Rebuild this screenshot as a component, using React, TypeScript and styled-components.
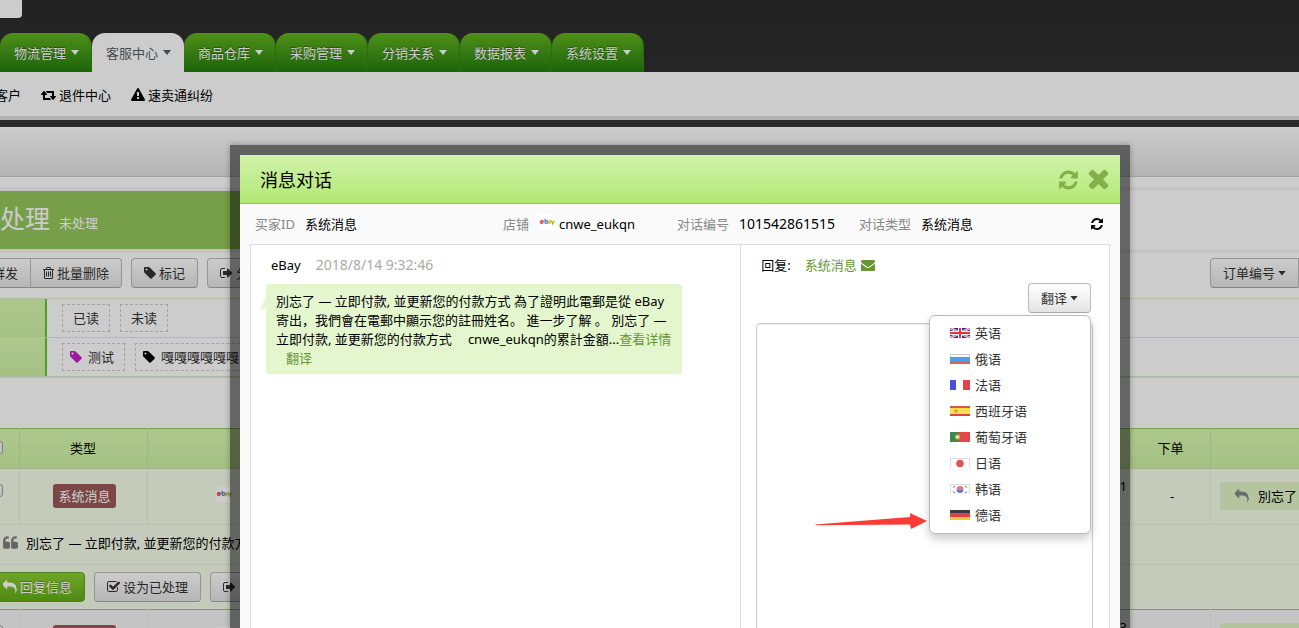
import React from 'react';
import styled, { createGlobalStyle, css } from 'styled-components';

const GlobalStyle = createGlobalStyle`
  *, *::before, *::after { box-sizing: border-box; }
  html, body { margin: 0; background: #fff; }
  body { overflow: hidden; }
  body, button, input, select, textarea {
    font-family: "Noto Sans", "Noto Sans CJK SC", sans-serif;
    font-size: 13px;
    line-height: 20px;
    color: #000;
  }
  a { color: inherit; text-decoration: none; }
  ul, h1, h2 { margin: 0; padding: 0; list-style: none; font-weight: 400; }
`;

/* ---------- icons ---------- */

type IconName =
  | 'retweet' | 'warning' | 'trash' | 'tag' | 'signOut' | 'check'
  | 'reply' | 'quote' | 'refresh' | 'times' | 'envelope';

const quoteMark =
  'M832 960v384q0 80-56 136t-136 56h-384q-80 0-136-56t-56-136v-704q0-104 40.5-198.5t109.5-163.5 163.5-109.5 198.5-40.5h64q26 0 45 19t19 45v128q0 26-19 45t-45 19h-64q-106 0-181 75t-75 181v32q0 40 28 68t68 28h224q80 0 136 56t56 136z';

const icons: Record<IconName, { x: number; y?: number; w: number; d: string }> = {
  retweet: { x: 0, w: 1920, d: 'M1280 1504q0 13-9.5 22.5t-22.5 9.5h-960q-8 0-13.5-2t-9-7-5.5-8-3-11.5-1-11.5v-608h-192q-26 0-45-19t-19-45q0-24 15-41l320-384q19-22 49-22t49 22l320 384q15 17 15 41 0 26-19 45t-45 19h-192v384h576q16 0 25 11l160 192q7 10 7 21zm640-416q0 24-15 41l-320 384q-20 23-49 23t-49-23l-320-384q-15-17-15-41 0-26 19-45t45-19h192v-384h-576q-16 0-25-12l-160-192q-7-9-7-20 0-13 9.5-22.5t22.5-9.5h960q8 0 13.5 2t9 7 5.5 8 3 11.5 1 11.5v608h192q26 0 45 19t19 45z' },
  warning: { x: 0, w: 1792, d: 'M1024 1375v-190q0-14-9.5-23.5t-22.5-9.5h-192q-13 0-22.5 9.5t-9.5 23.5v190q0 14 9.5 23.5t22.5 9.5h192q13 0 22.5-9.5t9.5-23.5zm-2-374l18-459q0-12-10-19-13-11-24-11h-220q-11 0-24 11-10 7-10 21l17 457q0 10 10 16.5t24 6.5h185q14 0 23.5-6.5t10.5-16.5zm-14-934l768 1408q35 63-2 126-17 29-46.5 46t-63.5 17h-1536q-34 0-63.5-17t-46.5-46q-37-63-2-126l768-1408q17-31 47-49t65-18 65 18 47 49z' },
  trash: { x: 192, w: 1408, d: 'M704 736v576q0 14-9 23t-23 9h-64q-14 0-23-9t-9-23v-576q0-14 9-23t23-9h64q14 0 23 9t9 23zm256 0v576q0 14-9 23t-23 9h-64q-14 0-23-9t-9-23v-576q0-14 9-23t23-9h64q14 0 23 9t9 23zm256 0v576q0 14-9 23t-23 9h-64q-14 0-23-9t-9-23v-576q0-14 9-23t23-9h64q14 0 23 9t9 23zm128 724v-948h-896v948q0 22 7 40.5t14.5 27 10.5 8.5h832q3 0 10.5-8.5t14.5-27 7-40.5zm-672-1076h448l-48-117q-7-9-17-11h-317q-10 2-17 11zm928 32v64q0 14-9 23t-23 9h-96v948q0 83-47 143.5t-113 60.5h-832q-66 0-113-58.5t-47-141.5v-952h-96q-14 0-23-9t-9-23v-64q0-14 9-23t23-9h309l70-167q15-37 54-63t79-26h320q40 0 79 26t54 63l70 167h309q14 0 23 9t9 23z' },
  tag: { x: 128, w: 1536, d: 'M576 448q0-53-37.5-90.5t-90.5-37.5-90.5 37.5-37.5 90.5 37.5 90.5 90.5 37.5 90.5-37.5 37.5-90.5zm1067 576q0 53-37 90l-491 492q-39 37-91 37-53 0-90-37l-715-716q-38-37-64.5-101t-26.5-117v-416q0-52 38-90t90-38h416q53 0 117 26.5t102 64.5l715 714q37 39 37 91z' },
  signOut: { x: 64, w: 1664, d: 'M704 1440q0 4 1 20t.5 26.5-3 23.5-10 19.5-20.5 6.5h-320q-119 0-203.5-84.5t-84.5-203.5v-704q0-119 84.5-203.5t203.5-84.5h320q13 0 22.5 9.5t9.5 22.5q0 4 1 20t.5 26.5-3 23.5-10 19.5-20.5 6.5h-320q-66 0-113 47t-47 113v704q0 66 47 113t113 47h312l11.5 1 11.5 3 8 5.5 7 9 2 13.5zm928-544q0 26-19 45l-544 544q-19 19-45 19t-45-19-19-45v-288h-448q-26 0-45-19t-19-45v-384q0-26 19-45t45-19h448v-288q0-26 19-45t45-19 45 19l544 544q19 19 19 45z' },
  check: { x: 64, w: 1664, d: 'M1472 930v318q0 119-84.5 203.5t-203.5 84.5h-832q-119 0-203.5-84.5t-84.5-203.5v-832q0-119 84.5-203.5t203.5-84.5h832q63 0 117 25 15 7 18 23 3 17-9 29l-49 49q-10 10-23 10-3 0-9-2-23-6-45-6h-832q-66 0-113 47t-47 113v832q0 66 47 113t113 47h832q66 0 113-47t47-113v-254q0-13 9-22l64-64q10-10 23-10 6 0 12 3 20 8 20 29zm231-489l-814 814q-24 24-57 24t-57-24l-430-430q-24-24-24-57t24-57l110-110q24-24 57-24t57 24l263 263 647-647q24-24 57-24t57 24l110 110q24 24 24 57t-24 57z' },
  reply: { x: 0, w: 1792, d: 'M1792 1120q0 166-127 451-3 7-10.5 24t-13.5 30-13 22q-12 17-28 17-15 0-23.5-10t-8.5-25q0-9 2.5-26.5t2.5-23.5q5-68 5-123 0-112-19.5-200.5t-54-153.5-89-112-118-77.5-150-46-176-23-204.5-7h-224v256q0 26-19 45t-45 19-45-19l-512-512q-19-19-19-45t19-45l512-512q19-19 45-19t45 19 19 45v256h224q713 0 875 403 53 134 53 333z' },
  quote: { x: 64, w: 1664, d: quoteMark + quoteMark.replace('M832', 'M1728') },
  refresh: { x: 128, w: 1536, d: 'M1639 1056q0 5-1 7-64 268-268 434.5t-478 166.5q-146 0-282.5-55t-243.5-157l-129 129q-19 19-45 19t-45-19-19-45v-448q0-26 19-45t45-19h448q26 0 45 19t19 45-19 45l-137 137q71 66 161 102t187 36q134 0 250-65t186-179q11-17 53-117 8-23 30-23h192q13 0 22.5 9.5t9.5 22.5zm25-800v448q0 26-19 45t-45 19h-448q-26 0-45-19t-19-45 19-45l138-138q-148-137-349-137-134 0-250 65t-186 179q-11 17-53 117-8 23-30 23h-199q-13 0-22.5-9.5t-9.5-22.5v-7q65-268 270-434.5t480-166.5q146 0 284 55.5t245 156.5l130-129q19-19 45-19t45 19 19 45z' },
  times: { x: 256, y: 90, w: 1280, d: 'M1490 1322q0 40-28 68l-136 136q-28 28-68 28t-68-28l-294-294-294 294q-28 28-68 28t-68-28l-136-136q-28-28-28-68t28-68l294-294-294-294q-28-28-28-68t28-68l136-136q28-28 68-28t68 28l294 294 294-294q28-28 68-28t68 28l136 136q28 28 28 68t-28 68l-294 294 294 294q28 28 28 68z' },
  envelope: { x: 0, w: 1792, d: 'M1792 710v794q0 66-47 113t-113 47h-1472q-66 0-113-47t-47-113v-794q44 49 101 87 362 246 497 345 57 42 92.5 65.5t94.5 48 110 24.5h2q51 0 110-24.5t94.5-48 92.5-65.5q170-123 498-345 57-39 100-87zm0-294q0 79-49 151t-122 123q-376 261-468 325-10 7-42.5 31t-54 38.5-52 32.5-57.5 27-50 9h-2q-23 0-50-9t-57.5-27-52-32.5-54-38.5-42.5-31q-91-64-262-182.5t-205-142.5q-62-42-117-115.5t-55-136.5q0-78 41.5-130t118.5-52h1472q65 0 112.5 47t47.5 113z' },
};

const Svg = styled.svg`
  display: block;
  flex: none;
  fill: currentColor;
`;

function Icon({ name, size = 14 }: { name: IconName; size?: number }) {
  const { x, y = 0, w, d } = icons[name];
  return (
    <Svg width={Math.round((w / 1792) * size)} height={size} viewBox={`${x} ${y} ${w} 1792`} aria-hidden>
      <path d={d} />
    </Svg>
  );
}

function EbayIcon() {
  return (
    <Svg width="16" height="16" viewBox="0 0 16 16" role="img" aria-label="eBay">
      <rect width="16" height="16" rx="2" fill="#fff" />
      <g fill="none" strokeWidth="1.2">
        <path stroke="#e5484f" d="M1.6 7.9h2.8a1.5 1.5 0 1 0-.5 1.2" />
        <path stroke="#4a86d8" d="M6 4.8v4.6M6 8a1.4 1.4 0 1 0 2.8 0a1.4 1.4 0 1 0-2.8 0" />
        <path stroke="#efb42c" d="M9.3 7.1q2.2-1 2.2.6v1.8M11.4 8q-2.2 0-1.9.9.7.8 1.9-.2" />
        <path stroke="#8fbc2c" d="M12.3 6.5l1.3 2.8M15.3 6.5l-2 4.3" />
      </g>
    </Svg>
  );
}

const Caret = styled.span`
  flex: none;
  width: 8px;
  height: 5px;
  background: currentColor;
  clip-path: polygon(0 0, 100% 0, 50% 100%);
`;

/* ---------- flags ---------- */

const stripes = (a: string, b: string, c: string, h = [3, 4, 3]) => (
  <>
    <rect width="20" height={h[0]} fill={a} />
    <rect y={h[0]} width="20" height={h[1]} fill={b} />
    <rect y={h[0] + h[1]} width="20" height={h[2]} fill={c} />
  </>
);

const languages: { name: string; flag: React.ReactNode }[] = [
  { name: '英语', flag: (
    <>
      <rect width="20" height="10" fill="#2b2f9c" />
      <path d="M0 0L20 10M20 0L0 10" stroke="#fff" strokeWidth="2.4" />
      <path d="M0 0L20 10M20 0L0 10" stroke="#e0424a" strokeWidth=".9" />
      <path d="M10 0V10M0 5H20" stroke="#fff" strokeWidth="4" />
      <path d="M10 0V10M0 5H20" stroke="#e0333c" strokeWidth="2" />
    </>
  ) },
  { name: '俄语', flag: <>{stripes('#fafafa', '#4f9fe8', '#e0634f', [3, 4, 3])}<path d="M0 .5H20M.5 0V3M19.5 0V3" stroke="#ccc" /></> },
  { name: '法语', flag: (
    <><rect width="20" height="10" fill="#fff" /><rect width="6" height="10" fill="#4a50dc" /><rect x="13" width="7" height="10" fill="#e0444a" /></>
  ) },
  { name: '西班牙语', flag: <>{stripes('#d8534a', '#f6e04c', '#d8434a', [2, 6, 2])}<circle cx="6" cy="5" r="1.7" fill="#d99a4a" /></> },
  { name: '葡萄牙语', flag: (
    <><rect width="20" height="10" fill="#e0484a" /><rect width="8" height="10" fill="#3a8a4c" /><circle cx="7.5" cy="5" r="2.5" fill="#c9b94c" /><circle cx="7.5" cy="5" r="1.2" fill="#eee" /></>
  ) },
  { name: '日语', flag: <><rect x=".5" y=".5" width="19" height="10" fill="#fff" stroke="#ddd" /><circle cx="10" cy="5.5" r="3.8" fill="#e4525a" /></> },
  { name: '韩语', flag: (
    <>
      <rect x=".5" y=".5" width="19" height="10" fill="#fff" stroke="#ddd" />
      <path d="M6.5 5.5a3.5 3.5 0 0 1 7 0z" fill="#e4727a" />
      <path d="M6.5 5.5a3.5 3.5 0 0 0 7 0z" fill="#6a74c8" />
      <path d="M3 3.5l2-1.5M15 2l2 1.5M3 7.5l2 1.5M15 9l2-1.5" stroke="#999" strokeWidth="1.3" />
    </>
  ) },
  { name: '德语', flag: stripes('#3a3a42', '#dd4046', '#f0c43c') },
];

/* ---------- buttons ---------- */

const Button = styled.button<{ $tone?: 'green'; $part?: 'first' | 'last' }>`
  display: flex;
  align-items: center;
  gap: 3px;
  flex: none;
  height: 30px;
  padding: 0 12px;
  color: #333;
  white-space: nowrap;
  background: linear-gradient(#fff, #e4e4e4);
  border: 1px solid #bbb;
  border-bottom-color: #a8a8a8;
  border-radius: 4px;
  ${({ $part }) => $part === 'first' && css`border-radius: 4px 0 0 4px; margin-right: -1px;`}
  ${({ $part }) => $part === 'last' && css`border-radius: 0 4px 4px 0;`}
  ${({ $tone }) => $tone === 'green' && css`
    color: #fff;
    text-shadow: 0 -1px 0 rgba(0, 0, 0, 0.25);
    background: linear-gradient(#8bcf34, #63ac16);
    border-color: #63a025;
  `}
`;

const IconButton = styled.button<{ $color?: string }>`
  display: flex;
  flex: none;
  padding: 0;
  color: ${({ $color }) => $color ?? '#000'};
  background: none;
  border: 0;
`;

/* ---------- page behind the dialog ---------- */

const Viewport = styled.div`
  overflow: hidden;
`;

/* The page is scrolled sideways, so it starts left of the window. */
const Page = styled.div`
  width: calc(100% + 160px);
  margin-left: -100px;
`;

const Header = styled.header`
  display: flex;
  flex-direction: column;
  justify-content: space-between;
  height: 72px;
  background: linear-gradient(#2b2b2b, #303030);
`;

const Logo = styled.div`
  width: 122px;
  height: 18px;
  background: #fff;
  border-radius: 0 0 4px 4px;
`;

const Tabs = styled.nav`
  display: flex;
  padding-left: 100px;
`;

const Tab = styled.a<{ $active?: boolean }>`
  display: flex;
  align-items: center;
  gap: 5px;
  width: 92px;
  height: 39px;
  padding-left: 14px;
  color: #fff;
  text-shadow: 0 -1px 1px rgba(0, 0, 0, 0.4);
  background: linear-gradient(#64b41e, #237d0f);
  border-right: 1px solid #2f8a14;
  border-radius: 13px 13px 0 0;
  ${({ $active }) => $active && css`
    color: #555e68;
    text-shadow: none;
    background: #fff;
    border-color: #fff;
  `}
`;

const SubNav = styled.nav`
  display: flex;
  align-items: center;
  gap: 20px;
  height: 48px;
  padding: 2px 0 0 95px;
  border-bottom: 4px solid #dedede;
`;

const SubLink = styled.a`
  display: flex;
  align-items: center;
  gap: 3px;
`;

const Toolbar = styled.div`
  height: 57px;
  background: linear-gradient(#fff, #e2e2e2);
  border-top: 7px solid #353535;
  border-bottom: 1px solid #c8c8c8;
`;

const StatusBar = styled.div`
  height: 66px;
  margin-top: 10px;
  border: 4px solid #f5f5f5;
  border-width: 4px 0;
`;

const StatusTitle = styled.h1`
  display: flex;
  align-items: baseline;
  gap: 9px;
  width: 360px;
  height: 58px;
  padding-left: 75px;
  color: #fff;
  font-size: 25px;
  line-height: 54px;
  background: #95c65b;

  small { font-size: 13px; }
`;

const Actions = styled.div`
  display: flex;
  justify-content: space-between;
  padding: 5px 0 10px 39px;
`;

const ButtonRow = styled.div`
  display: flex;
  gap: 9px;
`;

const ButtonGroup = styled.div`
  display: flex;
`;

const OrderFilter = styled.div`
  width: 149px;
`;

const Filters = styled.div`
  margin-bottom: 50px;
  border-bottom: 2px solid #dcedc8;
`;

const FilterRow = styled.div`
  display: flex;
  height: 39px;
  border-top: 1px solid #dcedc8;
`;

const FilterLabel = styled.div`
  width: 147px;
  background: linear-gradient(#d9fab1, #cff1a4);
  border-right: 2px solid #63c52d;
`;

const FilterTags = styled.div`
  display: flex;
  align-items: center;
  gap: 10px;
  padding-left: 15px;
`;

const Tag = styled.a<{ $icon?: boolean }>`
  display: flex;
  align-items: center;
  gap: 6px;
  height: 28px;
  padding: ${({ $icon }) => ($icon ? '0 10px 0 7px' : '0 10px')};
  color: #333;
  white-space: nowrap;
  border: 1px dashed #ccc;
`;

const TagIcon = styled.span<{ $color: string }>`
  color: ${({ $color }) => $color};
`;

const Table = styled.table`
  width: 100%;
  table-layout: fixed;
  border-collapse: collapse;
  border-top: 1px solid #94cd5e;
`;

const Th = styled.th`
  height: 40px;
  padding: 0 0 2px;
  font-weight: 400;
  background: linear-gradient(#d9fab1, #cff1a4);
  border: solid #c8e3a8;
  border-width: 0 1px 1px 0;
`;

const CheckTh = styled(Th)`
  padding-right: 16px;
`;

const Row = styled.tr<{ $last?: boolean; $plain?: boolean }>`
  background: ${({ $plain }) => ($plain ? '#f5f5f5' : '#f5feea')};
  border-bottom: 1px solid ${({ $last }) => ($last ? '#94cd5e' : '#e8efdf')};
`;

const Cell = styled.td<{ $h: number; $align?: 'left' | 'right'; $split?: boolean; $pad?: string }>`
  height: ${({ $h }) => $h}px;
  padding: ${({ $pad }) => $pad ?? '0'};
  text-align: ${({ $align }) => $align ?? 'center'};
  ${({ $split }) => $split && css`border-right: 1px solid #e8efdf;`}
`;

const Check = styled.input`
  appearance: none;
  display: block;
  width: 13px;
  height: 13px;
  margin: 0 0 0 auto;
  background: #f4f4f4;
  border: 1px solid #a0a0a0;
  border-radius: 3px;
`;

const TypeLabel = styled.span`
  display: inline-block;
  padding: 2px 5px;
  color: #fff;
  background: #9c5858;
  border-radius: 3px;
`;

const ReplyPill = styled.a`
  display: flex;
  align-items: center;
  gap: 9px;
  height: 28px;
  padding-left: 15px;
  white-space: nowrap;
  background: #e1f5c6;
  border-radius: 4px;

  svg { color: #888; }
`;

const Quote = styled.div`
  display: flex;
  align-items: center;
  gap: 8px;
  white-space: nowrap;

  svg { color: #808080; }
`;

const columns: (number | undefined)[] = [119, 128, undefined, 180, 80, 148];

function MessageRow({ plain, day }: { plain?: boolean; day: string }) {
  return (
    <Row $plain={plain}>
      <Cell $h={56} $split $pad="0 16px 12px 0"><Check type="checkbox" aria-label="选择" /></Cell>
      <Cell $h={56} $split $pad="0 0 2px 3px"><TypeLabel>系统消息</TypeLabel></Cell>
      <Cell $h={56} $pad="0 0 6px 68px"><EbayIcon /></Cell>
      <Cell $h={56} $align="right" $split $pad="0 3px 22px 0">{day}</Cell>
      <Cell $h={56} $split $pad="0 0 2px 3px">-</Cell>
      <Cell $h={56} $pad="0 0 2px 9px">
        <ReplyPill href="#"><Icon name="reply" />別忘了 — 立即付款</ReplyPill>
      </Cell>
    </Row>
  );
}

/* ---------- dialog ---------- */

const Backdrop = styled.div`
  position: fixed;
  inset: 0;
  display: flex;
  padding: 145px 169px 0 230px;
  background: rgba(0, 0, 0, 0.2);
`;

const Frame = styled.section`
  display: flex;
  flex: 1;
  min-width: 0;
  margin-bottom: -32px;
  padding: 10px;
  background: rgba(0, 0, 0, 0.5);
  box-shadow: 0 0 6px rgba(0, 0, 0, 0.3);
`;

const Dialog = styled.div`
  display: flex;
  flex: 1;
  flex-direction: column;
  min-width: 0;
  background: #fafafa;
`;

const DialogHead = styled.header`
  display: flex;
  align-items: center;
  gap: 10px;
  height: 49px;
  padding: 2px 11px 0 20px;
  background: linear-gradient(#d2f2ab, #b2e874);
  border-bottom: 1px solid #8fc45c;

  h2 { flex: 1; font-size: 18px; line-height: 24px; }
`;

const Info = styled.dl`
  display: flex;
  align-items: center;
  height: 40px;
  margin: 0;
  padding: 0 17px 0 15px;
`;

const Field = styled.div<{ $w?: number }>`
  display: flex;
  gap: 10px;
  width: ${({ $w }) => ($w ? `${$w}px` : 'auto')};
  white-space: nowrap;
  ${({ $w }) => !$w && css`flex: 1;`}

  dt { color: #888; }
  dd { display: flex; gap: 4px; margin: 0; }
`;

const Digits = styled.span`
  font-size: 14px;
`;

const Panel = styled.div`
  display: grid;
  flex: 1;
  grid-template-columns: minmax(0, 4fr) minmax(0, 3fr);
  margin: 0 10px;
  background: #fff;
  border: 1px solid #ddd;
`;

const Thread = styled.div`
  padding: 10px 15px;
  border-right: 1px solid #ddd;
`;

const Sender = styled.div`
  display: flex;
  gap: 15px;
  padding-left: 5px;

  time { color: #aaa; font-size: 14px; }
`;

const Bubble = styled.div`
  position: relative;
  width: 416px;
  margin-top: 9px;
  padding: 8px 10px 6px;
  line-height: 19px;
  background: #e3f6cd;
  border-radius: 3px;

  a { color: #689637; }

  &::before {
    content: "";
    position: absolute;
    top: 13px;
    left: -6px;
    width: 6px;
    height: 13px;
    background: #e3f6cd;
    clip-path: polygon(100% 0, 0 100%, 100% 80%);
  }
`;

const Line = styled.div`
  white-space: pre;
`;

const Indent = styled.span`
  padding-left: 16px;
`;

const TranslateLine = styled.div`
  padding-left: 10px;
`;

const Reply = styled.form`
  display: flex;
  flex-direction: column;
  padding: 10px 16px 14px 15px;
`;

const ReplyTo = styled.div`
  display: flex;
  align-items: center;
  padding-left: 5px;
`;

const ReplyLink = styled.a`
  display: flex;
  align-items: center;
  gap: 4px;
  margin-left: 14px;
  color: #689637;
`;

const TranslateBox = styled.div`
  position: relative;
  align-self: flex-end;
  margin: 8px 2px 10px 0;
`;

const Menu = styled.ul`
  position: absolute;
  top: 100%;
  right: 0;
  width: 162px;
  margin-top: 2px;
  padding: 4px 0 5px;
  background: #fff;
  border: 1px solid #bbb;
  border-radius: 6px;
  box-shadow: 0 5px 10px rgba(0, 0, 0, 0.2);
`;

const MenuLink = styled.a`
  display: flex;
  align-items: center;
  gap: 5px;
  height: 26px;
  padding-left: 20px;
  color: #333;
`;

const Arrow = styled(Svg)`
  position: absolute;
  right: 100%;
  bottom: 3px;
  margin-right: 3px;
`;

const Answer = styled.textarea`
  display: block;
  flex: 1;
  width: 100%;
  resize: none;
  background: #fff;
  border: 1px solid #ccc;
  border-radius: 4px;
  box-shadow: inset 0 1px 1px rgba(0, 0, 0, 0.08);
`;

const tabs = ['物流管理', '客服中心', '商品仓库', '采购管理', '分销关系', '数据报表', '系统设置'];

export default function App() {
  return (
    <Viewport>
      <GlobalStyle />
      <Page>
        <Header>
          <Logo />
          <Tabs>
            {tabs.map((t) => (
              <Tab key={t} href="#" $active={t === '客服中心'}>{t}<Caret /></Tab>
            ))}
          </Tabs>
        </Header>
        <SubNav>
          <SubLink href="#">客户</SubLink>
          <SubLink href="#"><Icon name="retweet" />退件中心</SubLink>
          <SubLink href="#"><Icon name="warning" />速卖通纠纷</SubLink>
        </SubNav>
        <Toolbar />
        <StatusBar>
          <StatusTitle>未处理<small>未处理</small></StatusTitle>
        </StatusBar>
        <Actions>
          <ButtonRow>
            <ButtonGroup>
              <Button $part="first"><Icon name="trash" />批量群发</Button>
              <Button $part="last"><Icon name="trash" />批量删除</Button>
            </ButtonGroup>
            <Button><Icon name="tag" />标记</Button>
            <Button><Icon name="signOut" />分配</Button>
          </ButtonRow>
          <OrderFilter>
            <Button $part="first">订单编号<Caret /></Button>
          </OrderFilter>
        </Actions>
        <Filters>
          <FilterRow>
            <FilterLabel />
            <FilterTags><Tag href="#">已读</Tag><Tag href="#">未读</Tag></FilterTags>
          </FilterRow>
          <FilterRow>
            <FilterLabel />
            <FilterTags>
              <Tag href="#" $icon><TagIcon $color="#c71fc7"><Icon name="tag" /></TagIcon>测试</Tag>
              <Tag href="#" $icon><TagIcon $color="#000"><Icon name="tag" /></TagIcon>嘎嘎嘎嘎嘎嘎</Tag>
            </FilterTags>
          </FilterRow>
        </Filters>
        <Table>
          <colgroup>
            {columns.map((w, i) => <col key={i} width={w} />)}
          </colgroup>
          <thead>
            <tr>
              <CheckTh><Check type="checkbox" aria-label="全选" /></CheckTh>
              <Th>类型</Th>
              <Th />
              <Th />
              <Th>下单</Th>
              <Th />
            </tr>
          </thead>
          <tbody>
            <MessageRow day="1" />
            <Row>
              <Cell $h={40} colSpan={6} $align="left" $pad="0 0 3px 103px">
                <Quote><Icon name="quote" size={16} />別忘了 — 立即付款, 並更新您的付款方式</Quote>
              </Cell>
            </Row>
            <Row $last>
              <Cell $h={45} colSpan={6} $align="left" $pad="0 0 0 90px">
                <ButtonRow>
                  <Button $tone="green"><Icon name="reply" />回复信息</Button>
                  <Button><Icon name="check" />设为已处理</Button>
                  <Button><Icon name="signOut" />分配</Button>
                </ButtonRow>
              </Cell>
            </Row>
            <MessageRow plain day="3" />
          </tbody>
        </Table>
      </Page>

      <Backdrop>
        <Frame role="dialog" aria-labelledby="dialog-title">
          <Dialog>
            <DialogHead>
              <h2 id="dialog-title">消息对话</h2>
              <IconButton $color="#84b04a" aria-label="刷新"><Icon name="refresh" size={22} /></IconButton>
              <IconButton $color="#84b04a" aria-label="关闭"><Icon name="times" size={30} /></IconButton>
            </DialogHead>
            <Info>
              <Field><dt>买家ID</dt><dd>系统消息</dd></Field>
              <Field $w={174}><dt>店铺</dt><dd><EbayIcon />cnwe_eukqn</dd></Field>
              <Field $w={182}><dt>对话编号</dt><dd><Digits>101542861515</Digits></dd></Field>
              <Field $w={232}><dt>对话类型</dt><dd>系统消息</dd></Field>
              <IconButton aria-label="重新载入"><Icon name="refresh" /></IconButton>
            </Info>
            <Panel>
              <Thread>
                <Sender><span>eBay</span><time>2018/8/14 9:32:46</time></Sender>
                <Bubble>
                  <Line>別忘了 — 立即付款, 並更新您的付款方式 為了證明此電郵是從 eBay</Line>
                  <Line>寄出，我們會在電郵中顯示您的註冊姓名。 進一步了解 。 別忘了 —</Line>
                  <Line>立即付款, 並更新您的付款方式<Indent>cnwe_eukqn的累計金額...</Indent><a href="#">查看详情</a></Line>
                  <TranslateLine><a href="#">翻译</a></TranslateLine>
                </Bubble>
              </Thread>
              <Reply>
                <ReplyTo>
                  <label htmlFor="answer">回复:</label>
                  <ReplyLink href="#">系统消息<Icon name="envelope" /></ReplyLink>
                </ReplyTo>
                <TranslateBox>
                  <Button type="button">翻译<Caret /></Button>
                  <Menu>
                    {languages.map(({ name, flag }) => (
                      <li key={name}>
                        <MenuLink href="#">
                          <Svg width="20" height="10" viewBox="0 0 20 10" aria-hidden>{flag}</Svg>
                          {name}
                        </MenuLink>
                      </li>
                    ))}
                    <Arrow width="112" height="18" viewBox="0 0 112 18" aria-hidden>
                      <path d="M0 12.500L95 5V1l17 8-16 8-1-4.500-94 .8z" fill="#fb3b36" />
                    </Arrow>
                  </Menu>
                </TranslateBox>
                <Answer id="answer" />
              </Reply>
            </Panel>
          </Dialog>
        </Frame>
      </Backdrop>
    </Viewport>
  );
}
